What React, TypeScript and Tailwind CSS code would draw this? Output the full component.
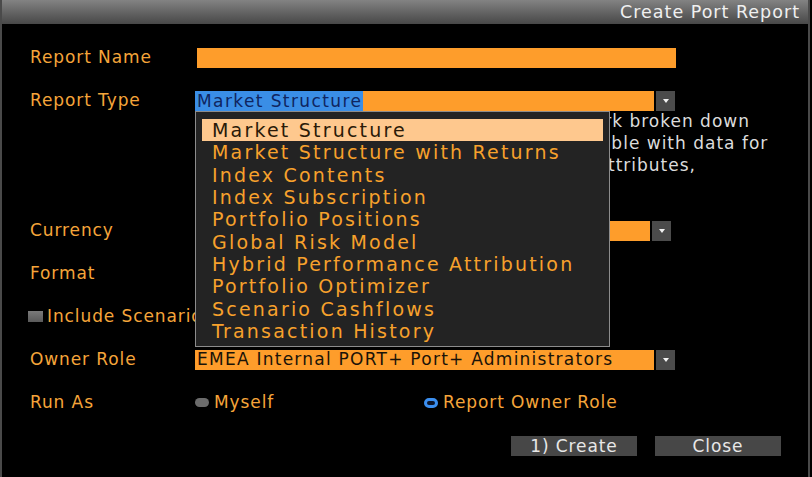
import React from 'react'

const options = [
  'Market Structure',
  'Market Structure with Returns',
  'Index Contents',
  'Index Subscription',
  'Portfolio Positions',
  'Global Risk Model',
  'Hybrid Performance Attribution',
  'Portfolio Optimizer',
  'Scenario Cashflows',
  'Transaction History',
]

// wraps behind the open list, only the tail of each line shows
const description = [
  'Displays the portfolio against the benchmark broken down',
  'by sectors and currency in one combined table with data for',
  'weights, returns, risks and other selected attributes,',
  'per security.',
]

function Arrow() {
  return (
    <div className="flex h-[20px] w-[19px] items-center justify-center bg-[#4b4b4b]">
      <svg width="6" height="4" viewBox="0 0 6 4">
        <path d="M0 0 L6 0 L3 4 Z" fill="#f2f2f2" />
      </svg>
    </div>
  )
}

function Label({ children }: { children: React.ReactNode }) {
  return <div className="w-[193px] pl-[28px] text-[#f5a53a]">{children}</div>
}

export default function App() {
  return (
    <div
      className="relative h-[477px] w-[812px] overflow-hidden bg-black text-[17px] tracking-[0.9px]"
      style={{ fontFamily: '"DejaVu Sans", Verdana, sans-serif' }}
    >
      <div className="flex h-[477px] w-[810px] flex-col border-l-2 border-r-2 border-[#4a4a4a]">
        {/* title bar */}
        <div className="flex h-[24px] items-center justify-end bg-gradient-to-b from-[#838383] to-[#484848] pr-[8px] text-[17.5px] tracking-[1px] text-[#f0f0f0]">
          Create Port Report
        </div>

        <div className="flex flex-col gap-[22px] pt-[23px]">
          <div className="flex h-[21px] items-center">
            <Label>Report Name</Label>
            <div className="ml-[2px] h-[20px] w-[479px] bg-[#fe9d2b]" />
          </div>

          <div>
            <div className="flex h-[21px] items-center">
              <Label>Report Type</Label>
              <div className="flex h-[20px] w-[459px] items-center bg-[#fe9d2b] tracking-[1.4px]">
                <span className="h-[20px] bg-[#3a8ee6] pl-[2px] pr-[1px] leading-[20px] text-[#0f2560]">
                  Market Structure
                </span>
              </div>
              <div className="ml-[2px]">
                <Arrow />
              </div>
            </div>
            <div className="pl-[193px] text-[17px] leading-[21.75px] tracking-[1px] whitespace-pre text-[#dcdcdc]">
              {description.map((line) => (
                <div key={line}>{line}</div>
              ))}
            </div>
          </div>

          <div className="flex h-[21px] items-center">
            <Label>Currency</Label>
            <div className="h-[20px] w-[455px] bg-[#fe9d2b]" />
            <div className="ml-[2px]">
              <Arrow />
            </div>
          </div>

          <div className="flex h-[21px] items-center">
            <Label>Format</Label>
            <div className="h-[20px] w-[180px] bg-[#fe9d2b]" />
          </div>

          <div className="flex h-[21px] items-center pl-[26px] text-[#f5a53a]">
            <div className="mr-[4px] h-[11px] w-[15px] bg-gradient-to-b from-[#7a7a7a] to-[#5a5a5a]" />
            Include Scenario Cashflows
          </div>

          <div className="flex h-[21px] items-center">
            <Label>Owner Role</Label>
            <div className="flex h-[20px] w-[459px] items-center bg-[#fe9d2b] pl-[2px] tracking-[1.25px] text-[#1a1308]">
              EMEA Internal PORT+ Port+ Administrators
            </div>
            <div className="ml-[2px]">
              <Arrow />
            </div>
          </div>

          <div className="flex h-[21px] items-center">
            <Label>Run As</Label>
            <div className="flex w-[229px] items-center text-[#f5a53a]">
              <div className="mr-[5px] h-[9px] w-[14px] rounded-full bg-[#6b6b6b]" />
              Myself
            </div>
            <div className="flex items-center text-[#f5a53a]">
              <div className="mr-[5px] h-[10px] w-[14px] rounded-full border-[3px] border-[#3b8ff0] bg-[#0c1428]" />
              Report Owner Role
            </div>
          </div>

          <div className="flex h-[21px] items-center justify-end gap-[18px] pr-[27px] text-[#e8e8e8]">
            <button className="h-[20px] w-[126px] bg-[#474747] leading-[20px]">1) Create</button>
            <button className="h-[20px] w-[126px] bg-[#474747] leading-[20px]">Close</button>
          </div>
        </div>
      </div>

      {/* open dropdown list */}
      <div className="absolute left-[195px] top-[111px] h-[236px] w-[415px] border border-[#8c8c8c] bg-[#232323] px-[6px] pt-[7px] text-[19px] tracking-[2.2px]">
        {options.map((opt, i) => (
          <div
            key={opt}
            className={
              i === 0
                ? 'h-[22.33px] bg-[#fec88e] pl-[10px] leading-[22.33px] text-[#2a1a08]'
                : 'h-[22.33px] pl-[10px] leading-[22.33px] text-[#f7a12c]'
            }
          >
            {opt}
          </div>
        ))}
      </div>
    </div>
  )
}
